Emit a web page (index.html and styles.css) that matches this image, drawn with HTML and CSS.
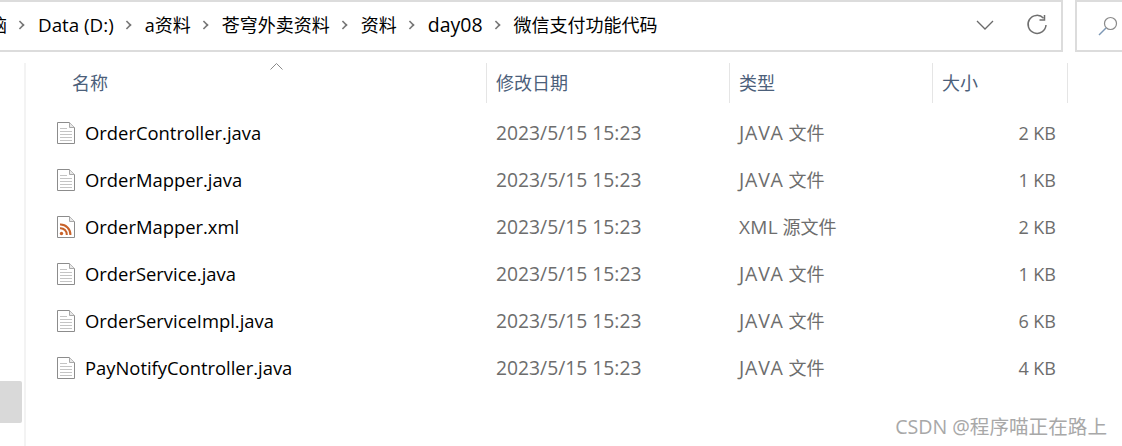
FILE: index.html
```html
<!DOCTYPE html>
<html lang="zh-CN">
<head>
  <meta charset="UTF-8" />
  <title>微信支付功能代码</title>
  <link rel="stylesheet" href="styles.css">
</head>
<body>
  <svg class="defs" width="0" height="0">
    <symbol id="doc" viewBox="0 0 18 22">
      <path d="M.5.5h12l5 5v16H.5z" fill="#fff" stroke="#8c8c8c"/>
      <path d="M12.5.5v5h5" fill="#e8e8e8" stroke="#a8a8a8"/>
      <path d="M3 6.5h7M3 9.5h12M3 12.5h12M3 15.5h12M3 18.5h12" stroke="#c4c4c4"/>
    </symbol>
    <symbol id="xml" viewBox="0 0 18 22">
      <path d="M.5.5h12l5 5v16H.5z" fill="#fff" stroke="#8c8c8c"/>
      <path d="M12.5.5v5h5" fill="#e8e8e8" stroke="#a8a8a8"/>
      <circle cx="4.5" cy="17.5" r="1.7" fill="#c8622a"/>
      <path d="M3 12.2a6.3 6.3 0 0 1 6.8 6.8M3 8.6a9.9 9.9 0 0 1 10.400 10.400" fill="none" stroke="#c8622a" stroke-width="2"/>
    </symbol>
  </svg>

  <div class="toolbar">
    <div class="address">
      <span class="crumb first">脑</span><span class="sep"></span>
      <span class="crumb latin">Data (D:)</span><span class="sep"></span>
      <span class="crumb">a资料</span><span class="sep"></span>
      <span class="crumb">苍穹外卖资料</span><span class="sep"></span>
      <span class="crumb">资料</span><span class="sep"></span>
      <span class="crumb digits">day08</span><span class="sep"></span>
      <span class="crumb">微信支付功能代码</span>
      <svg class="chevron" width="18" height="10" viewBox="0 0 18 10"><path d="M1 1l8 8 8-8" fill="none" stroke="#6a6a6a" stroke-width="1.300"/></svg>
      <svg class="refresh" width="22" height="22" viewBox="0 0 22 22"><path d="M17.600 4.200A9 9 0 1 0 20 11" fill="none" stroke="#6f6f6f" stroke-width="1.500"/><path d="M18.500 1v5h-5" fill="none" stroke="#6f6f6f" stroke-width="1.500"/></svg>
    </div>
    <div class="search">
      <svg width="20" height="20" viewBox="0 0 20 20"><circle cx="12.500" cy="7.500" r="6" fill="none" stroke="#8a8a8a" stroke-width="1.200"/><path d="M8 12l-7 7" stroke="#7d97b5" stroke-width="1.500"/></svg>
    </div>
  </div>

  <div class="main">
    <div class="sidebar"><div class="thumb"></div></div>
    <div class="files">
      <svg class="sort" width="13" height="7" viewBox="0 0 13 7"><path d="M.5 6.500l6-6 6 6" fill="none" stroke="#8a8a8a"/></svg>
      <div class="row head">
        <div class="col name">名称</div>
        <div class="col date">修改日期</div>
        <div class="col type">类型</div>
        <div class="col size">大小</div>
      </div>
      <div class="row item">
        <div class="col name"><svg class="icon"><use href="#doc"/></svg>OrderController.java</div>
        <div class="col date">2023/5/15 15:23</div>
        <div class="col type"><span class="java">JAVA</span> 文件</div>
        <div class="col size">2 KB</div>
      </div>
      <div class="row item">
        <div class="col name"><svg class="icon"><use href="#doc"/></svg>OrderMapper.java</div>
        <div class="col date">2023/5/15 15:23</div>
        <div class="col type"><span class="java">JAVA</span> 文件</div>
        <div class="col size">1 KB</div>
      </div>
      <div class="row item">
        <div class="col name"><svg class="icon"><use href="#xml"/></svg>OrderMapper.xml</div>
        <div class="col date">2023/5/15 15:23</div>
        <div class="col type"><span class="xml">XML</span> 源文件</div>
        <div class="col size">2 KB</div>
      </div>
      <div class="row item">
        <div class="col name"><svg class="icon"><use href="#doc"/></svg>OrderService.java</div>
        <div class="col date">2023/5/15 15:23</div>
        <div class="col type"><span class="java">JAVA</span> 文件</div>
        <div class="col size">1 KB</div>
      </div>
      <div class="row item">
        <div class="col name"><svg class="icon"><use href="#doc"/></svg>OrderServiceImpl.java</div>
        <div class="col date">2023/5/15 15:23</div>
        <div class="col type"><span class="java">JAVA</span> 文件</div>
        <div class="col size">6 KB</div>
      </div>
      <div class="row item">
        <div class="col name"><svg class="icon"><use href="#doc"/></svg>PayNotifyController.java</div>
        <div class="col date">2023/5/15 15:23</div>
        <div class="col type"><span class="java">JAVA</span> 文件</div>
        <div class="col size">4 KB</div>
      </div>
    </div>
  </div>

  <div class="watermark">CSDN @程序喵正在路上</div>
</body>
</html>
```

FILE: styles.css
```css
* {
  margin: 0;
  padding: 0;
  box-sizing: border-box;
}

html, body {
  height: 100%;
}

body {
  position: relative;
  overflow: hidden;
  background: #fff;
  color: #000;
  font-family: "Open Sans", "Noto Sans CJK SC", sans-serif;
  font-size: 18px;
}

.defs {
  position: absolute;
}

.toolbar {
  display: flex;
  gap: 12px;
  height: 52px;
  margin-left: -2px;
  margin-right: -40px;
}

.address {
  display: flex;
  align-items: center;
  width: 1065px;
  padding-bottom: 2px;
  border: 2px solid #dcdcdc;
  border-left: 0;
}

.crumb {
  white-space: nowrap;
  line-height: 24px;
}

.crumb.first {
  width: 9px;
  overflow: hidden;
  direction: rtl;
}

.crumb.latin {
  font-size: 18.800px;
}

.crumb.digits {
  font-size: 19.500px;
}

.sep {
  width: 8px;
  height: 8px;
  margin: 0 14px 0 9px;
  border-top: 2px solid #777;
  border-right: 2px solid #777;
  transform: rotate(45deg) scale(.8);
}

.chevron {
  margin-left: auto;
}

.refresh {
  margin: 0 13px 0 32px;
}

.search {
  flex: 1;
  display: flex;
  align-items: center;
  padding-left: 21px;
  border: 2px solid #dcdcdc;
  border-right: 0;
}

.main {
  display: flex;
  height: 394px;
  padding-top: 11px;
}

.sidebar {
  position: relative;
  width: 26px;
  border-right: 2px solid #f3f3f3;
}

.thumb {
  position: absolute;
  left: 0;
  top: 318px;
  width: 22px;
  height: 42px;
  border-radius: 0 2px 2px 0;
  background: #d9d9d9;
}

.files {
  position: relative;
  flex: 1;
}

.sort {
  position: absolute;
  left: 244px;
  top: 0;
}

.row {
  display: grid;
  grid-template-columns: 461px 243px 203px 135px;
  align-items: center;
}

.head {
  height: 40px;
  margin-bottom: 6px;
  color: #4c607a;
}

.head .col {
  display: flex;
  align-items: center;
  height: 100%;
  padding: 0 0 2px 9px;
  border-right: 1px solid #e5e5e5;
}

.head .name {
  padding-left: 46px;
}

.item {
  height: 47px;
  color: #6d6d6d;
}

.item .col {
  padding-left: 9px;
}

.item .name {
  display: flex;
  align-items: center;
  gap: 10px;
  padding-left: 31px;
  color: #000;
  font-size: 18.400px;
}

.item .date {
  font-size: 19.300px;
}

.java {
  font-size: 19.500px;
  letter-spacing: .8px;
}

.xml {
  font-size: 19px;
  letter-spacing: .3px;
}

.item .size {
  padding: 0 12px 0 0;
  text-align: right;
}

.icon {
  width: 18px;
  height: 22px;
  flex: none;
}

.watermark {
  position: absolute;
  right: 15px;
  bottom: 6px;
  color: #a8a8a8;
  font-size: 19.600px;
}
```
